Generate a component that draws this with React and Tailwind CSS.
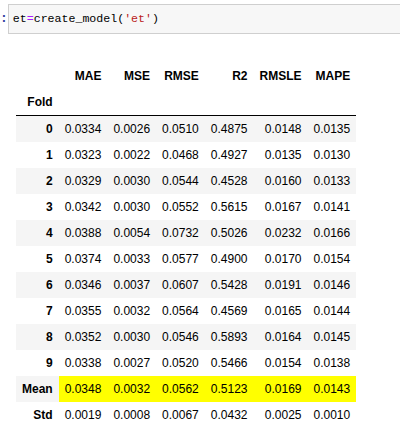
import React from 'react'

const cols = ["MAE", "MSE", "RMSE", "R2", "RMSLE", "MAPE"];

const rows = [
  ["0", "0.0334", "0.0026", "0.0510", "0.4875", "0.0148", "0.0135"],
  ["1", "0.0323", "0.0022", "0.0468", "0.4927", "0.0135", "0.0130"],
  ["2", "0.0329", "0.0030", "0.0544", "0.4528", "0.0160", "0.0133"],
  ["3", "0.0342", "0.0030", "0.0552", "0.5615", "0.0167", "0.0141"],
  ["4", "0.0388", "0.0054", "0.0732", "0.5026", "0.0232", "0.0166"],
  ["5", "0.0374", "0.0033", "0.0577", "0.4900", "0.0170", "0.0154"],
  ["6", "0.0346", "0.0037", "0.0607", "0.5428", "0.0191", "0.0146"],
  ["7", "0.0355", "0.0032", "0.0564", "0.4569", "0.0165", "0.0144"],
  ["8", "0.0352", "0.0030", "0.0546", "0.5893", "0.0164", "0.0145"],
  ["9", "0.0338", "0.0027", "0.0520", "0.5466", "0.0154", "0.0138"],
  ["Mean", "0.0348", "0.0032", "0.0562", "0.5123", "0.0169", "0.0143"],
  ["Std", "0.0019", "0.0008", "0.0067", "0.0432", "0.0025", "0.0010"],
];

function App() {
  return (
    <div className="w-[400px] h-[437px] overflow-hidden bg-white text-black">
      <div className="flex items-start pt-[4px]">
        <div className="w-[11px] pt-[7px] text-[13px] leading-[16px] font-bold text-[#303F9F] font-['Liberation_Mono',monospace]">:</div>
        <div className="flex-1 min-w-[420px] h-[30px] border border-[#cfcfcf] bg-[#f7f7f7] pl-[4px] flex items-center text-[11.6px] font-['Liberation_Mono',monospace] text-black">
          <span>et</span>
          <span className="text-[#AA22FF]">=</span>
          <span>create_model(</span>
          <span className="text-[#BA2121]">'et'</span>
          <span>)</span>
        </div>
      </div>

      <div className="pl-[16px] pt-[29px]">
        <table className="border-collapse text-[12px] leading-[14px] font-['Liberation_Sans',Arial,sans-serif]">
          <thead className="border-b border-black align-bottom">
            <tr>
              <th className="px-[6px] py-[6px]"></th>
              {cols.map((c) => (
                <th key={c} className="px-[6px] py-[6px] text-right font-bold">{c}</th>
              ))}
            </tr>
            <tr>
              <th className="px-[6px] py-[6px] text-right font-bold">Fold</th>
              {cols.map((c) => (
                <th key={c} className="px-[6px] py-[6px]"></th>
              ))}
            </tr>
          </thead>
          <tbody>
            {rows.map((r, i) => (
              <tr key={r[0]} className={i % 2 === 0 ? "bg-[#f5f5f5]" : "bg-white"}>
                <th className="px-[6px] py-[6px] text-right font-bold">{r[0]}</th>
                {r.slice(1).map((v, j) => (
                  <td
                    key={j}
                    className={"px-[6px] py-[6px] text-right font-normal " + (r[0] === "Mean" ? "bg-[#ffff00]" : "")}
                  >
                    {v}
                  </td>
                ))}
              </tr>
            ))}
          </tbody>
        </table>
      </div>
    </div>
  )
}

export default App
